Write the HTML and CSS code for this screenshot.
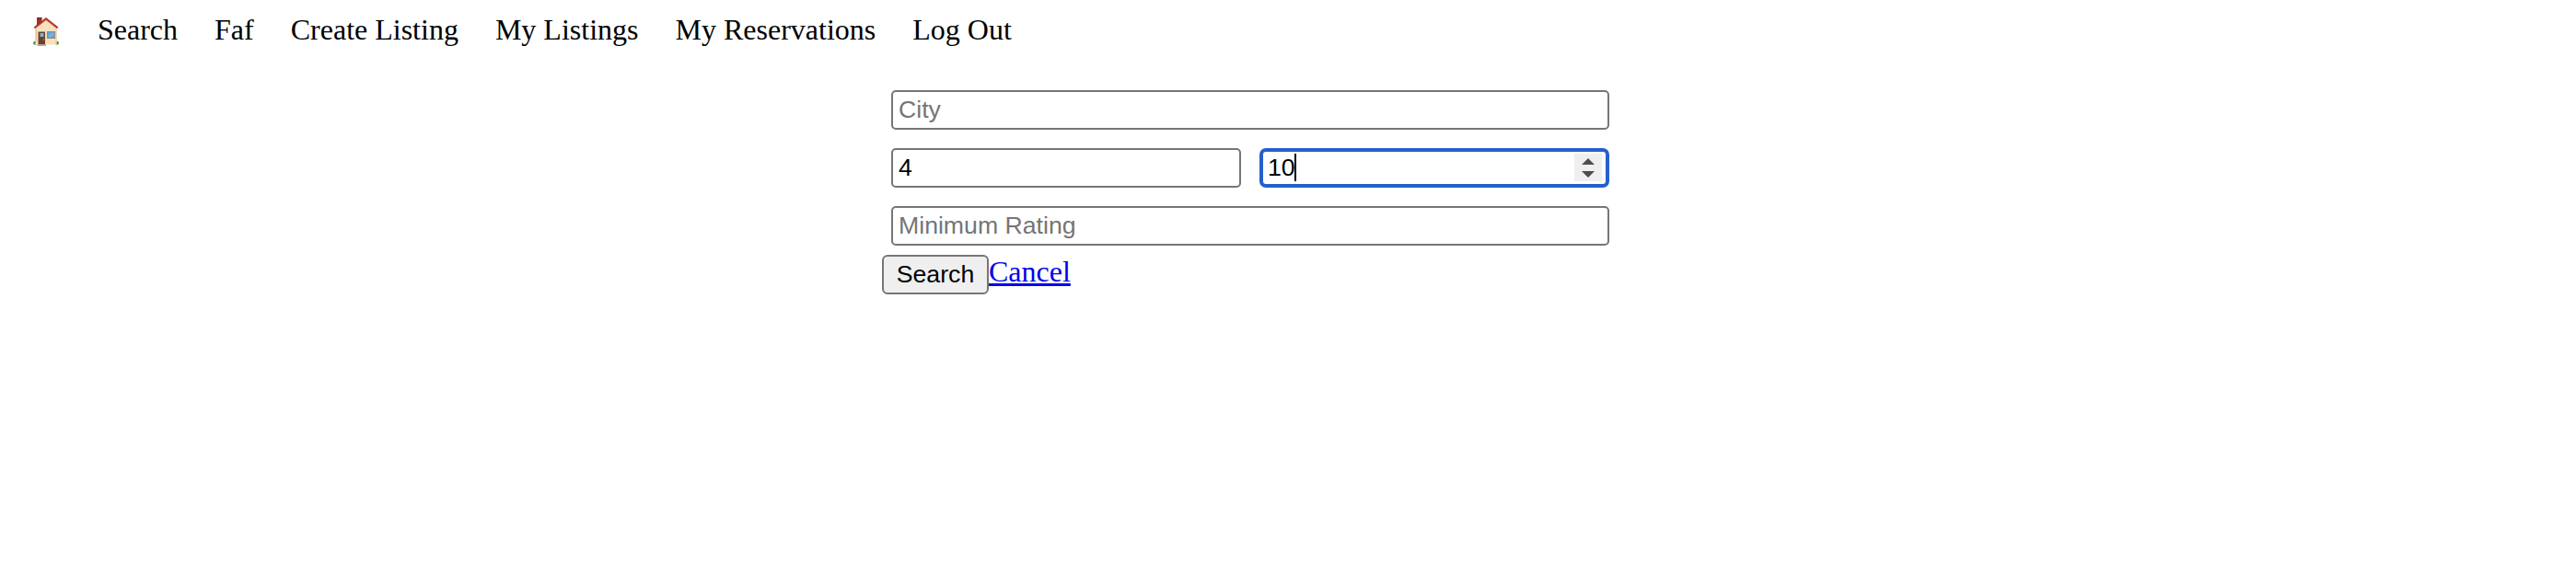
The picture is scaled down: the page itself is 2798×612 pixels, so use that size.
FILE: index.html
```html
<!DOCTYPE html>
<html lang="en">
<head>
<meta charset="utf-8">
<title>Search</title>
<link rel="stylesheet" href="styles.css">
</head>
<body>
<nav class="nav">
  <a class="home" href="#" aria-label="Home">
    <svg class="house" viewBox="0 0 28 31">
      <ellipse cx="2.300" cy="27.800" rx="2.300" ry="2" fill="#568f35"/>
      <ellipse cx="25.700" cy="27.800" rx="2.300" ry="2" fill="#568f35"/>
      <path d="M4 .5h5.500V9H4z" fill="#a62f27"/><path d="M4 0h5.500v1.500H4z" fill="#70251f"/>
      <path d="M2.500 11.500 14 2l11.500 9.500v18h-23z" fill="#f3e2bd"/>
      <path d="M2.500 12.500H4V26H2.500zM24.500 12.500h1V29h-1z" fill="#dcc69b"/>
      <path d="M1.500 11.500 14 1.700l12.500 9.800" fill="none" stroke="#d73a32" stroke-width="1.900"/>
      <path d="M.8 11 14 .5 27.200 11" fill="none" stroke="#7f2a24" stroke-width=".9"/>
      <path d="M5.500 15.500h7.500v14H5.500z" fill="#70402b"/>
      <path d="M7.500 17h4v4h-4z" fill="#70b2e4"/>
      <circle cx="11.500" cy="24" r=".6" fill="#e8c16b"/>
      <path d="M4.500 29.300h9.500V31H4.500z" fill="#b3a59b"/>
      <path d="M15 15h9v8h-9z" fill="#9a8674"/>
      <path d="M16 16h7v6h-7z" fill="#62a6df"/>
      <path d="m17 21 4-4h1.500l-4 4z" fill="#8bc5ef"/>
    </svg>
  </a>
  <a href="#">Search</a>
  <a href="#">Faf</a>
  <a href="#">Create Listing</a>
  <a href="#">My Listings</a>
  <a href="#">My Reservations</a>
  <a href="#">Log Out</a>
</nav>
<form class="search-form">
  <div class="fields">
    <div class="field placeholder wide">City</div>
    <div class="field">4</div>
    <div class="field focused">10<span class="caret"></span>
      <span class="spinner"><svg viewBox="0 0 30 30"><path d="M8 12 15 5l7 7zM8 19l7 7 7-7z" fill="#4d4d4d"/></svg></span>
    </div>
    <div class="field placeholder wide">Minimum Rating</div>
  </div>
  <div class="actions">
    <button class="submit" type="button">Search</button><a class="cancel" href="#">Cancel</a>
  </div>
</form>
</body>
</html>
```
FILE: styles.css
```css
* { box-sizing: border-box; }
body {
  margin: 0;
  background: #fff;
  font: 32px/36px "Liberation Serif", "Times New Roman", serif;
}
.nav {
  display: flex;
  gap: 40px;
  height: 78px;
  padding: 14px 0 0 36px;
}
.nav a { color: #000; text-decoration: none; white-space: nowrap; }
.nav .home { width: 30px; height: 36px; padding-top: 5px; line-height: 0; }
.house { display: block; width: 28px; height: 31px; }
.search-form { width: 800px; margin-left: 958px; }
.fields {
  display: grid;
  grid-template-columns: 1fr 1fr;
  gap: 20px;
  padding: 20px 10px 10px;
}
.field {
  display: flex;
  align-items: center;
  height: 43px;
  padding: 0 6px 1px;
  border: 2px solid #767676;
  border-radius: 5px;
  font: 26.67px/30px "Liberation Sans", Arial, sans-serif;
  color: #000;
}
.wide { grid-column: 1 / -1; }
.placeholder { color: #757575; }
.focused { border: 4px solid #265fcb; border-radius: 7px; padding: 0 4px 1px 5px; }
.caret { width: 2px; height: 30px; margin-left: -1px; background: #000; }
.spinner { width: 30px; height: 30px; margin-left: auto; background: #efefef; }
.spinner svg { display: block; width: 30px; height: 30px; }
.actions { display: flex; align-items: flex-start; }
.submit {
  width: 116px;
  height: 43px;
  padding: 0 0 1px;
  border: 2px solid #767676;
  border-radius: 6px;
  background: #efefef;
  color: #000;
  font: 26.67px/30px "Liberation Sans", Arial, sans-serif;
}
.cancel { color: #0000ee; text-decoration: underline; text-decoration-thickness: 3px; }
```
